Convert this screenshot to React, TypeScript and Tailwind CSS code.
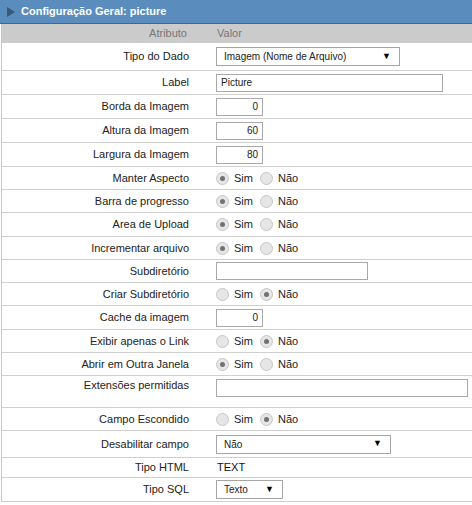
import React from "react";

type Field =
  | { kind: "select"; w: string; value: string }
  | { kind: "input"; w: string; value?: string; right?: boolean }
  | { kind: "radio"; sim: boolean }
  | { kind: "text"; value: string };

type Row = { label: string; h: string; top?: boolean; field: Field };

const rows: Row[] = [
  { label: "Tipo do Dado", h: "h-[28px]", field: { kind: "select", w: "w-[184px]", value: "Imagem (Nome de Arquivo)" } },
  { label: "Label", h: "h-[24px]", field: { kind: "input", w: "w-[227px]", value: "Picture" } },
  { label: "Borda da Imagem", h: "h-[24px]", field: { kind: "input", w: "w-[47px]", value: "0", right: true } },
  { label: "Altura da Imagem", h: "h-[24px]", field: { kind: "input", w: "w-[47px]", value: "60", right: true } },
  { label: "Largura da Imagem", h: "h-[24px]", field: { kind: "input", w: "w-[47px]", value: "80", right: true } },
  { label: "Manter Aspecto", h: "h-[23px]", field: { kind: "radio", sim: true } },
  { label: "Barra de progresso", h: "h-[23px]", field: { kind: "radio", sim: true } },
  { label: "Area de Upload", h: "h-[24px]", field: { kind: "radio", sim: true } },
  { label: "Incrementar arquivo", h: "h-[23px]", field: { kind: "radio", sim: true } },
  { label: "Subdiretório", h: "h-[23px]", field: { kind: "input", w: "w-[152px]" } },
  { label: "Criar Subdiretório", h: "h-[23px]", field: { kind: "radio", sim: false } },
  { label: "Cache da imagem", h: "h-[24px]", field: { kind: "input", w: "w-[47px]", value: "0", right: true } },
  { label: "Exibir apenas o Link", h: "h-[23px]", field: { kind: "radio", sim: false } },
  { label: "Abrir em Outra Janela", h: "h-[23px]", field: { kind: "radio", sim: true } },
  { label: "Extensões permitidas", h: "h-[32px]", top: true, field: { kind: "input", w: "w-[252px]" } },
  { label: "Campo Escondido", h: "h-[23px]", field: { kind: "radio", sim: false } },
  { label: "Desabilitar campo", h: "h-[27px]", field: { kind: "select", w: "w-[175px]", value: "Não" } },
  { label: "Tipo HTML", h: "h-[20px]", field: { kind: "text", value: "TEXT" } },
  { label: "Tipo SQL", h: "h-[24px]", field: { kind: "select", w: "w-[67px]", value: "Texto" } },
];

function Radio({ on }: { on: boolean }) {
  return (
    <span className="w-[13px] h-[13px] rounded-full border border-[#c6c6c6] bg-[#e6e6e6] flex items-center justify-center shrink-0">
      {on && <span className="w-[5px] h-[5px] rounded-full bg-[#727272]" />}
    </span>
  );
}

function Value({ field }: { field: Field }) {
  if (field.kind === "select") {
    return (
      <div className={`${field.w} h-[19px] border border-[#a6a6a6] bg-white flex items-center justify-between pl-[7px] pr-[8px] text-[10px] text-[#222]`}>
        <span>{field.value}</span>
        <span className="text-[9px] text-black">▼</span>
      </div>
    );
  }
  if (field.kind === "input") {
    return (
      <div
        className={`${field.w} h-[18px] border border-[#a9a9a9] bg-white flex items-center px-[4px] text-[10px] text-[#222] ${
          field.right ? "justify-end" : ""
        }`}
      >
        {field.value}
      </div>
    );
  }
  if (field.kind === "radio") {
    return (
      <div className="flex items-center text-[11px] text-[#222]">
        <Radio on={field.sim} />
        <span className="ml-[5px]">Sim</span>
        <span className="ml-[7px]">
          <Radio on={!field.sim} />
        </span>
        <span className="ml-[5px]">Não</span>
      </div>
    );
  }
  return <span className="text-[11px] text-[#111] pl-px">{field.value}</span>;
}

export default function App() {
  return (
    <div className="w-[472px] h-[505px] bg-white font-['Liberation_Sans',Arial,sans-serif]">

      {/* TITLE BAR */}
      <div className="h-[24px] bg-[#5a8dbd] border-b border-[#3f6890] flex items-center pl-[7px]">
        <span className="w-0 h-0 border-t-[5px] border-b-[5px] border-t-transparent border-b-transparent border-l-[8px] border-l-[#37597a]" />
        <span className="ml-[6px] text-[11px] font-bold text-white">
          Configuração Geral: picture
        </span>
      </div>

      <div className="ml-px border-l border-[#c8c8c8]">

        {/* COLUMN HEADER */}
        <div className="h-[19px] bg-[#cbcbcb] flex items-center text-[11px] text-[#777]">
          <div className="w-[206px] text-right pr-[21px]">Atributo</div>
          <div className="pl-[9px]">Valor</div>
        </div>

        {/* ROWS */}
        {rows.map((r) => (
          <div
            key={r.label}
            className={`${r.h} flex border-b border-[#cfcfcf] ${r.top ? "items-start pt-[3px]" : "items-center"}`}
          >
            <div className={`w-[206px] text-right pr-[19px] text-[11px] text-[#222] ${r.top ? "leading-none pt-[1px]" : ""}`}>
              {r.label}
            </div>
            <div className="pl-[8px] flex items-center">
              <Value field={r.field} />
            </div>
          </div>
        ))}

      </div>
    </div>
  );
}
